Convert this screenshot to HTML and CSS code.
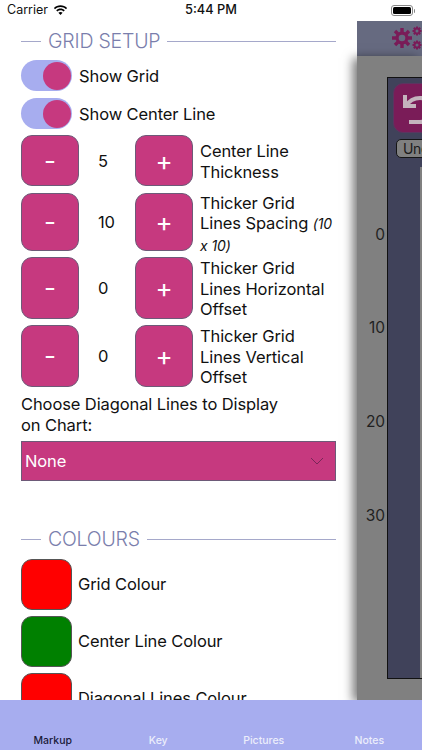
FILE: index.html
```html
<!DOCTYPE html>
<html lang="en">
<head>
<meta charset="utf-8">
<title>Markup</title>
<link rel="stylesheet" href="styles.css">
</head>
<body>
<div class="app">
  <header class="status">
    <div class="status-left">
      <span>Carrier</span>
      <svg class="wifi" viewBox="0 0 16 12" width="15" height="11"><path d="M8 2.2c2.3 0 4.4.9 6 2.4l1.2-1.3C13.300 1.400 10.800.3 8 .3S2.700 1.400.8 3.300L2 4.600c1.600-1.500 3.700-2.400 6-2.400z"/><path d="M8 5.800c1.300 0 2.500.5 3.400 1.300l1.300-1.300C11.400 4.600 9.800 3.900 8 3.900s-3.400.7-4.700 1.900l1.300 1.300C5.500 6.300 6.700 5.800 8 5.800z"/><path d="M8 7.500c-.9 0-1.700.3-2.300.9L8 11l2.300-2.600c-.6-.6-1.400-.9-2.300-.9z"/></svg>
    </div>
    <div class="status-time">5:44 PM</div>
    <div class="status-right">
      <span class="battery"><span class="battery-fill"></span></span><span class="battery-tip"></span>
    </div>
  </header>

  <main class="main">
    <section class="settings">
      <h2 class="section-title"><span class="rule rule-short"></span><span>GRID SETUP</span><span class="rule"></span></h2>

      <div class="toggle-row"><span class="toggle"><span class="knob"></span></span><span class="row-text">Show Grid</span></div>
      <div class="toggle-row"><span class="toggle"><span class="knob"></span></span><span class="row-text">Show Center Line</span></div>

      <div class="stepper">
        <button class="step">-</button><span class="value">5</span><button class="step">+</button>
        <span class="step-label">Center Line Thickness</span>
      </div>
      <div class="stepper tall">
        <button class="step">-</button><span class="value">10</span><button class="step">+</button>
        <span class="step-label">Thicker Grid Lines Spacing <em class="note">(10 x 10)</em></span>
      </div>
      <div class="stepper">
        <button class="step">-</button><span class="value">0</span><button class="step">+</button>
        <span class="step-label">Thicker Grid Lines Horizontal Offset</span>
      </div>
      <div class="stepper">
        <button class="step">-</button><span class="value">0</span><button class="step">+</button>
        <span class="step-label">Thicker Grid Lines Vertical Offset</span>
      </div>

      <p class="choose">Choose Diagonal Lines to Display on Chart:</p>
      <div class="select">
        <span>None</span>
        <svg viewBox="0 0 14 8" width="14" height="8"><path d="M1 1l6 6 6-6" fill="none" stroke="#7a2658" stroke-width="1"/></svg>
      </div>

      <h2 class="section-title colours"><span class="rule rule-short"></span><span>COLOURS</span><span class="rule"></span></h2>
      <div class="colour-row"><span class="swatch red"></span><span class="row-text">Grid Colour</span></div>
      <div class="colour-row"><span class="swatch green"></span><span class="row-text">Center Line Colour</span></div>
      <div class="colour-row"><span class="swatch red"></span><span class="row-text">Diagonal Lines Colour</span></div>
    </section>

    <aside class="chart-side">
      <div class="chart-head">
        <svg class="gears" viewBox="0 0 30 26" width="30" height="26">
          <g fill="#7a1c58">
            <circle cx="10" cy="13" r="6.500"/>
            <g stroke="#7a1c58" stroke-width="3.400">
              <path d="M10 3v20M0 13h20M3 6l14 14M17 6L3 20"/>
            </g>
            <g stroke="#7a1c58" stroke-width="2">
              <path d="M25 1.500v9M20.500 6h9M21.800 2.800l6.400 6.400M28.200 2.800l-6.400 6.400"/>
              <path d="M25 15.500v9M20.500 20h9M21.800 16.800l6.400 6.400M28.200 16.800l-6.400 6.400"/>
            </g>
            <circle cx="25" cy="6" r="3.400"/>
            <circle cx="25" cy="20" r="3.400"/>
          </g>
          <circle cx="10" cy="13" r="3.300" fill="#666a80"/>
          <circle cx="25" cy="6" r="1.500" fill="#666a80"/>
          <circle cx="25" cy="20" r="1.500" fill="#666a80"/>
        </svg>
      </div>
      <div class="sheet">
        <div class="axis">
          <span class="tick t0">0</span>
          <span class="tick t10">10</span>
          <span class="tick t20">20</span>
          <span class="tick t30">30</span>
        </div>
        <div class="chart-panel">
          <div class="undo-btn">
            <svg class="undo-icon" viewBox="0 0 48 50" width="48" height="50"><path d="M11 11v11h11M12 22c3-5 8-8 14-8 7 0 12 5 12 12s-5 12-12 12h-11" fill="none" stroke="#c4b4bd" stroke-width="4"/></svg>
          </div>
          <div class="undo-label">Undo</div>
          <div class="grid-strip"></div>
        </div>
      </div>
    </aside>
  </main>

  <nav class="tabs">
    <span class="tab active">Markup</span>
    <span class="tab">Key</span>
    <span class="tab">Pictures</span>
    <span class="tab">Notes</span>
  </nav>
</div>
</body>
</html>
```
FILE: styles.css
```css
* { box-sizing: border-box; }
html, body { margin: 0; padding: 0; }
body {
  width: 422px;
  height: 750px;
  overflow: hidden;
  background: #fff;
  color: #111;
  font-family: Inter, "Liberation Sans", sans-serif;
  font-size: 16.500px;
  line-height: 20.500px;
  letter-spacing: -.1px;
}
.app { display: flex; flex-direction: column; height: 750px; }

.status {
  height: 21px;
  flex: none;
  display: grid;
  grid-template-columns: 1fr auto 1fr;
  align-items: center;
  padding: 0 7px 0 7px;
  font-size: 12.500px;
  letter-spacing: 0;
}
.status-left { display: flex; align-items: center; gap: 5px; }
.wifi { fill: #000; }
.status-time { font-weight: 500; font-size: 12.800px; }
.status-right { display: flex; justify-content: flex-end; align-items: center; gap: 1px; }
.battery {
  width: 22px; height: 10.500px;
  border: 1px solid #888; border-radius: 3px;
  padding: 1px; display: flex;
}
.battery-fill { flex: 1; background: #000; border-radius: 1.500px; }
.battery-tip { width: 1.500px; height: 4px; background: #888; border-radius: 0 1px 1px 0; }

.main { flex: 1; min-height: 0; display: flex; overflow: hidden; }

.settings {
  width: 357px;
  flex: none;
  padding: 8px 21px 0;
}
.section-title {
  margin: 0;
  height: 24px;
  display: flex;
  align-items: center;
  gap: 7px;
  font-size: 19.500px;
  font-weight: 300;
  letter-spacing: -.2px;
  color: #7a7eac;
  white-space: nowrap;
}
.rule { flex: 1; height: 1px; background: #a5a8ca; }
.rule-short { flex: none; width: 20px; }
.section-title.colours { margin-top: 46.500px; }

.row-text { padding-top: 1px; }
.toggle-row { display: flex; align-items: center; gap: 7px; height: 31px; margin-top: 7px; }
.toggle {
  width: 51px; height: 31px; border-radius: 16px;
  background: #a7adef;
  display: flex; justify-content: flex-end; align-items: center;
  padding-right: 1.500px;
}
.knob { width: 28px; height: 28px; border-radius: 50%; background: #c6397f; }

.stepper {
  display: grid;
  grid-template-columns: 58px 56px 58px 1fr;
  margin-top: 6.500px;
  min-height: 51px;
}
.stepper.tall { grid-template-rows: 58px; }
.toggle-row + .stepper { margin-top: 6px; }
.step {
  padding: 0;
  border: 1px solid #6d5a78;
  border-radius: 11px;
  background: #c6397f;
  color: #fff;
  font-family: Inter, sans-serif;
  font-size: 26px;
  font-weight: 400;
  line-height: 1;
}
.value { align-self: center; padding: 1px 0 0 19px; }
.step-label { align-self: center; padding: 1px 0 0 7px; margin-bottom: -1px; }
.tall .step-label { align-self: start; padding-top: 0; margin-bottom: 0; }
.note { font-size: 14px; }

.choose { margin: 7.500px 0 0; padding-right: 40px; }
.select {
  margin-top: 6px;
  height: 40px;
  display: flex;
  justify-content: space-between;
  align-items: center;
  padding: 0 11px 0 3px;
  background: #c6397f;
  border: 1px solid #6d5a78;
  color: #fff;
}
.colour-row { display: flex; align-items: center; gap: 6px; margin-top: 6px; }
.section-title + .colour-row { margin-top: 7px; }
.swatch {
  width: 51px; height: 51px; flex: none;
  border: 1px solid #555; border-radius: 11px;
}
.red { background: #f00; }
.green { background: #008000; }

.chart-side { flex: 1; min-width: 0; display: flex; flex-direction: column; }
.chart-head {
  height: 35px; flex: none;
  background: #666a80;
  display: flex; justify-content: flex-end; align-items: center;
}
.gears { flex: none; margin-top: -2px; }
.sheet {
  flex: 1;
  background: #808080;
  padding: 21px 0 21px 30px;
  display: flex;
  position: relative;
  box-shadow: -4px 2px 10px rgba(0, 0, 0, .55);
}
.axis { position: absolute; inset: 0; }
.tick { position: absolute; right: 37px; color: #1f1f1f; font-size: 15.500px; }
.t0 { top: 169px; }
.t10 { top: 262px; }
.t20 { top: 356px; }
.t30 { top: 450px; }
.chart-panel {
  flex: 1;
  background: #40425a;
  border: 1px solid #111;
  border-right: 0;
  padding: 5px 0 0 5px;
  position: relative;
  overflow: hidden;
}
.undo-btn {
  width: 60px; height: 50px;
  background: #7a1c58;
  border: 1px solid #5b3560;
  border-radius: 10px;
}
.undo-icon { display: block; }
.undo-label {
  width: 60px; height: 19px;
  margin: 6px 0 0 3px;
  padding-left: 6px;
  background: #808080;
  border: 1px solid #151515;
  border-radius: 5px;
  font-size: 14px;
  letter-spacing: -.3px;
  line-height: 17px;
  color: #1a1a1a;
}
.grid-strip {
  position: absolute;
  left: 32px; top: 89px; bottom: 0; width: 6px;
  background: #808080;
}

.tabs {
  height: 50px; flex: none;
  background: #a7adef;
  display: grid;
  grid-template-columns: repeat(4, 1fr);
  align-items: end;
  padding-bottom: 2px;
  font-size: 10.500px;
  font-weight: 500;
  line-height: 14px;
  letter-spacing: 0;
  text-align: center;
  color: #eceefb;
}
.tab.active { color: #1b1b3a; }
```
